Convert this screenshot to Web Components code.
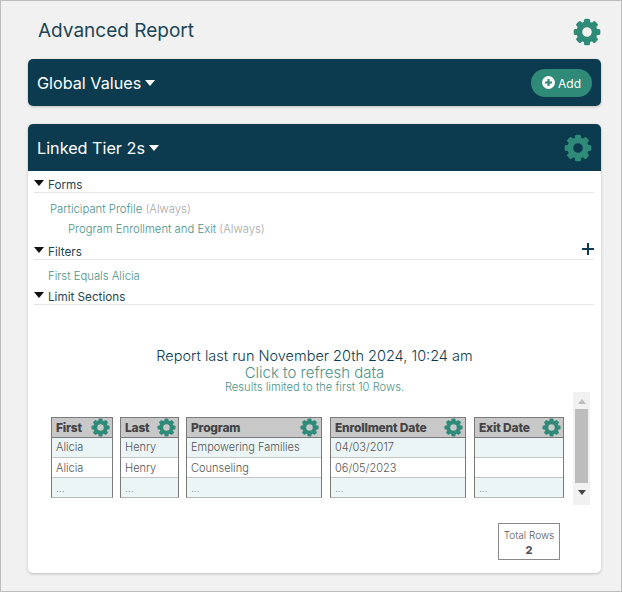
<!DOCTYPE html>
<html>
<head>
<meta charset="utf-8">
<title>Advanced Report</title>
<style>
    html, body { margin: 0; padding: 0; }
    body { width: 622px; height: 592px; overflow: hidden; font-family: Inter, "Open Sans", sans-serif; }
</style>
</head>
<body>
<report-page>
    <report-bar slot="global" label="Global Values">
        <add-button slot="action"></add-button>
    </report-bar>
    <report-bar slot="linked" label="Linked Tier 2s">
        <gear-icon slot="action" size="28"></gear-icon>
        <report-section label="Forms" first>
            <form-line indent="16">
                <a-link>Participant Profile</a-link> <a-muted>(Always)</a-muted>
            </form-line>
            <form-line indent="34" height="19">
                <a-link>Program Enrollment and Exit</a-link> <a-muted>(Always)</a-muted>
            </form-line>
        </report-section>
        <report-section label="Filters" plus>
            <form-line indent="14" height="17"><a-link>First Equals Alicia</a-link></form-line>
        </report-section>
        <report-section label="Limit Sections"></report-section>
        <report-results></report-results>
    </report-bar>
</report-page>

<script>
class GearIcon extends HTMLElement {
    connectedCallback() {
        const size = this.getAttribute('size') || 20;
        let teeth = '';
        for (let i = 0; i < 8; i++) {
            teeth += `<rect x="9.4" y="0.6" width="5.2" height="6" rx="1.3" transform="rotate(${i * 45} 12 12)"/>`;
        }
        this.attachShadow({ mode: 'open' }).innerHTML = `
            <style>
                :host { display: block; width: ${size}px; height: ${size}px; color: #2f8a78; flex: none; }
                svg { display: block; width: 100%; height: 100%; }
            </style>
            <svg viewBox="0 0 24 24" fill="currentColor">
                ${teeth}
                <circle cx="12" cy="12" r="6.6" fill="none" stroke="currentColor" stroke-width="5"/>
            </svg>`;
    }
}
customElements.define('gear-icon', GearIcon);

class FormLine extends HTMLElement {
    connectedCallback() {
        const indent = this.getAttribute('indent') || 0;
        const height = this.getAttribute('height') || 20;
        this.attachShadow({ mode: 'open' }).innerHTML = `
            <style>
                :host { display: block; height: ${height}px; padding-left: ${indent}px; font-size: 11.3px; font-weight: 300; line-height: 20px; }
                :host(:not(:last-child)), :host([height="17"]) { padding-top: 6px; }
            </style>
            <slot></slot>`;
    }
}
customElements.define('form-line', FormLine);

class ALink extends HTMLElement {
    constructor() {
        super();
        this.attachShadow({ mode: 'open' }).innerHTML = `
            <style>:host { color: #4a9288; }</style><slot></slot>`;
    }
}
customElements.define('a-link', ALink);

class AMuted extends HTMLElement {
    constructor() {
        super();
        this.attachShadow({ mode: 'open' }).innerHTML = `
            <style>:host { color: #a6a6a6; }</style><slot></slot>`;
    }
}
customElements.define('a-muted', AMuted);

class AddButton extends HTMLElement {
    constructor() {
        super();
        this.attachShadow({ mode: 'open' }).innerHTML = `
            <style>
                :host { display: flex; align-items: center; justify-content: center; gap: 3px; width: 61px; height: 28px;
                    border-radius: 14px; background: #2f8a78; color: #fff; font-size: 12px; box-sizing: border-box; padding-top: 1px; }
                svg { width: 13px; height: 13px; display: block; margin-top: -2px; }
                span { margin-top: 1px; }
            </style>
            <svg viewBox="0 0 13 13">
                <circle cx="6.5" cy="6.5" r="6.5" fill="#fff"/>
                <path d="M6.5 3v7M3 6.5h7" stroke="#2f8a78" stroke-width="2.2"/>
            </svg>
            <span>Add</span>`;
    }
}
customElements.define('add-button', AddButton);

class ReportBar extends HTMLElement {
    constructor() {
        super();
        const label = this.getAttribute('label');
        this.attachShadow({ mode: 'open' }).innerHTML = `
            <style>
                :host { display: block; border-radius: 5px; background: #fff; box-shadow: 0 1px 3px rgba(0,0,0,.22); overflow: hidden; }
                .head { display: flex; align-items: center; justify-content: space-between; height: 47px;
                    padding: 0 9px; background: #0c3b4f; color: #fff; }
                .title { display: flex; align-items: center; gap: 4px; font-size: 16.2px; font-weight: 400; padding-top: 1px; }
                .title svg { width: 10px; height: 6px; display: block; }
            </style>
            <div class="head">
                <div class="title">${label}<svg viewBox="0 0 10 6"><path d="M0 0h10L5 6z" fill="#fff"/></svg></div>
                <slot name="action"></slot>
            </div>
            <slot></slot>`;
    }
}
customElements.define('report-bar', ReportBar);

class ReportSection extends HTMLElement {
    constructor() {
        super();
        const label = this.getAttribute('label');
        const plus = this.hasAttribute('plus');
        this.attachShadow({ mode: 'open' }).innerHTML = `
            <style>
                :host { display: block; padding: 0 7px 0 6px; }
                .row { position: relative; display: flex; align-items: center; gap: 4px; height: 22px; box-sizing: border-box; padding-top: 6px;
                    border-bottom: 1px solid #e6e6e6; color: #1f4452; font-size: 11.7px; }
                .row svg.caret { width: 10px; height: 6px; margin-top: -3px; display: block; }
                .plus { position: absolute; right: 0; top: 5px; width: 12px; height: 12px; display: block; }
            </style>
            <div class="row">
                <svg class="caret" viewBox="0 0 10 6"><path d="M0 0h10L5 6z" fill="#111"/></svg>
                <span>${label}</span>
                ${plus ? '<svg class="plus" viewBox="0 0 12 12"><path d="M6 0v12M0 6h12" stroke="#0c3b4f" stroke-width="2"/></svg>' : ''}
            </div>
            <slot></slot>`;
    }
}
customElements.define('report-section', ReportSection);

class ReportColumn extends HTMLElement {
    connectedCallback() {
        const title = this.getAttribute('title-text');
        const rows = (this.getAttribute('rows') || '').split('|');
        const width = this.getAttribute('width');
        this.attachShadow({ mode: 'open' }).innerHTML = `
            <style>
                :host { display: block; width: ${width}px; flex: none; box-sizing: border-box;
                    border: 1px solid #7a7a7a; border-bottom: 1px solid #b5b5b5; }
                .head { display: flex; align-items: center; justify-content: space-between; height: 19px;
                    padding: 0 2px 0 4px; background: #c8c8c8; border-bottom: 1px solid #7a7a7a; color: #444;
                    font-size: 12px; font-weight: 800; letter-spacing: -.2px; }
                .cell { height: 19px; line-height: 20px; padding: 0 4px; background: #fff; color: #555; font-size: 11px; font-weight: 300;
                    border-bottom: 1px solid #c4c4c4; white-space: nowrap; overflow: hidden; }
                .cell:nth-child(odd) { background: #ebf5f5; }
                .cell:nth-child(3) { line-height: 18px; }
                .cell:last-child { border-bottom: 0; font-size: 10px; color: #777; }
            </style>
            <div class="head"><span>${title}</span><gear-icon size="19"></gear-icon></div>
            ${rows.map(r => `<div class="cell">${r}</div>`).join('')}`;
    }
}
customElements.define('report-column', ReportColumn);

class ReportResults extends HTMLElement {
    constructor() {
        super();
        this.attachShadow({ mode: 'open' }).innerHTML = `
            <style>
                :host { display: block; height: 268px; padding-top: 42px; box-sizing: border-box; }
                .meta { text-align: center; height: 45px; }
                .run { color: #0c3b4f; font-size: 14.5px; line-height: 17px; font-weight: 300; }
                .refresh { color: #4a9288; font-size: 15px; line-height: 17px; font-weight: 300; }
                .limit { color: #4a9288; font-size: 11.2px; line-height: 12px; font-weight: 300; }
                .scroller { display: flex; height: 113px; margin: 0 11px 0 23px; box-sizing: border-box; }
                .cols { display: flex; align-items: flex-start; gap: 7px; flex: 1; padding-top: 25px; }
                .cols .wide { margin-left: 1px; }
                .bar { width: 17px; flex: none; background: #f1f1f1; display: flex; flex-direction: column; align-items: center; }
                .bar svg { width: 8px; height: 5px; display: block; margin: 7px 0 5px; }
                .thumb { width: 13px; height: 74px; background: #bdbdbd; }
                .total { width: 62px; height: 37px; box-sizing: border-box; margin: 18px 0 0 470px; border: 1px solid #8a8a8a;
                    text-align: center; color: #555; font-size: 10px; font-weight: 300; padding-top: 5px; line-height: 12px; }
                .total b { display: block; font-size: 11px; font-weight: 800; line-height: 16px; margin-top: 1px; }
            </style>
            <div class="meta">
                <div class="run">Report last run November 20th 2024, 10:24 am</div>
                <div class="refresh">Click to refresh data</div>
                <div class="limit">Results limited to the first 10 Rows.</div>
            </div>
            <div class="scroller">
                <div class="cols">
                    <report-column width="62" title-text="First" rows="Alicia|Alicia|..."></report-column>
                    <report-column width="59" title-text="Last" rows="Henry|Henry|..."></report-column>
                    <report-column width="136" title-text="Program" rows="Empowering Families|Counseling|..."></report-column>
                    <report-column class="wide" width="136" title-text="Enrollment Date" rows="04/03/2017|06/05/2023|..."></report-column>
                    <report-column class="wide" width="90" title-text="Exit Date" rows="&nbsp;|&nbsp;|..."></report-column>
                </div>
                <div class="bar">
                    <svg viewBox="0 0 8 5"><path d="M4 0l4 5H0z" fill="#bdbdbd"/></svg>
                    <div class="thumb"></div>
                    <svg viewBox="0 0 8 5"><path d="M0 0h8L4 5z" fill="#444"/></svg>
                </div>
            </div>
            <div class="total">Total Rows<b>2</b></div>`;
    }
}
customElements.define('report-results', ReportResults);

class ReportPage extends HTMLElement {
    constructor() {
        super();
        this.attachShadow({ mode: 'open' }).innerHTML = `
            <style>
                :host { display: block; width: 622px; height: 592px; box-sizing: border-box; background: #f1f1f1;
                    border: 1px solid #bdbdbd; padding: 0 20px 0 27px; }
                .top { display: flex; align-items: center; justify-content: space-between; height: 58px; padding: 0 0 0 10px; }
                h1 { margin: 1px 0 0; font-size: 19px; font-weight: 400; color: #1a4656; }
                gear-icon { margin-top: 3px; }
                .gap { height: 18px; }
            </style>
            <div class="top"><h1>Advanced Report</h1><gear-icon size="28"></gear-icon></div>
            <slot name="global"></slot>
            <div class="gap"></div>
            <slot name="linked"></slot>`;
    }
}
customElements.define('report-page', ReportPage);
</script>
</body>
</html>
